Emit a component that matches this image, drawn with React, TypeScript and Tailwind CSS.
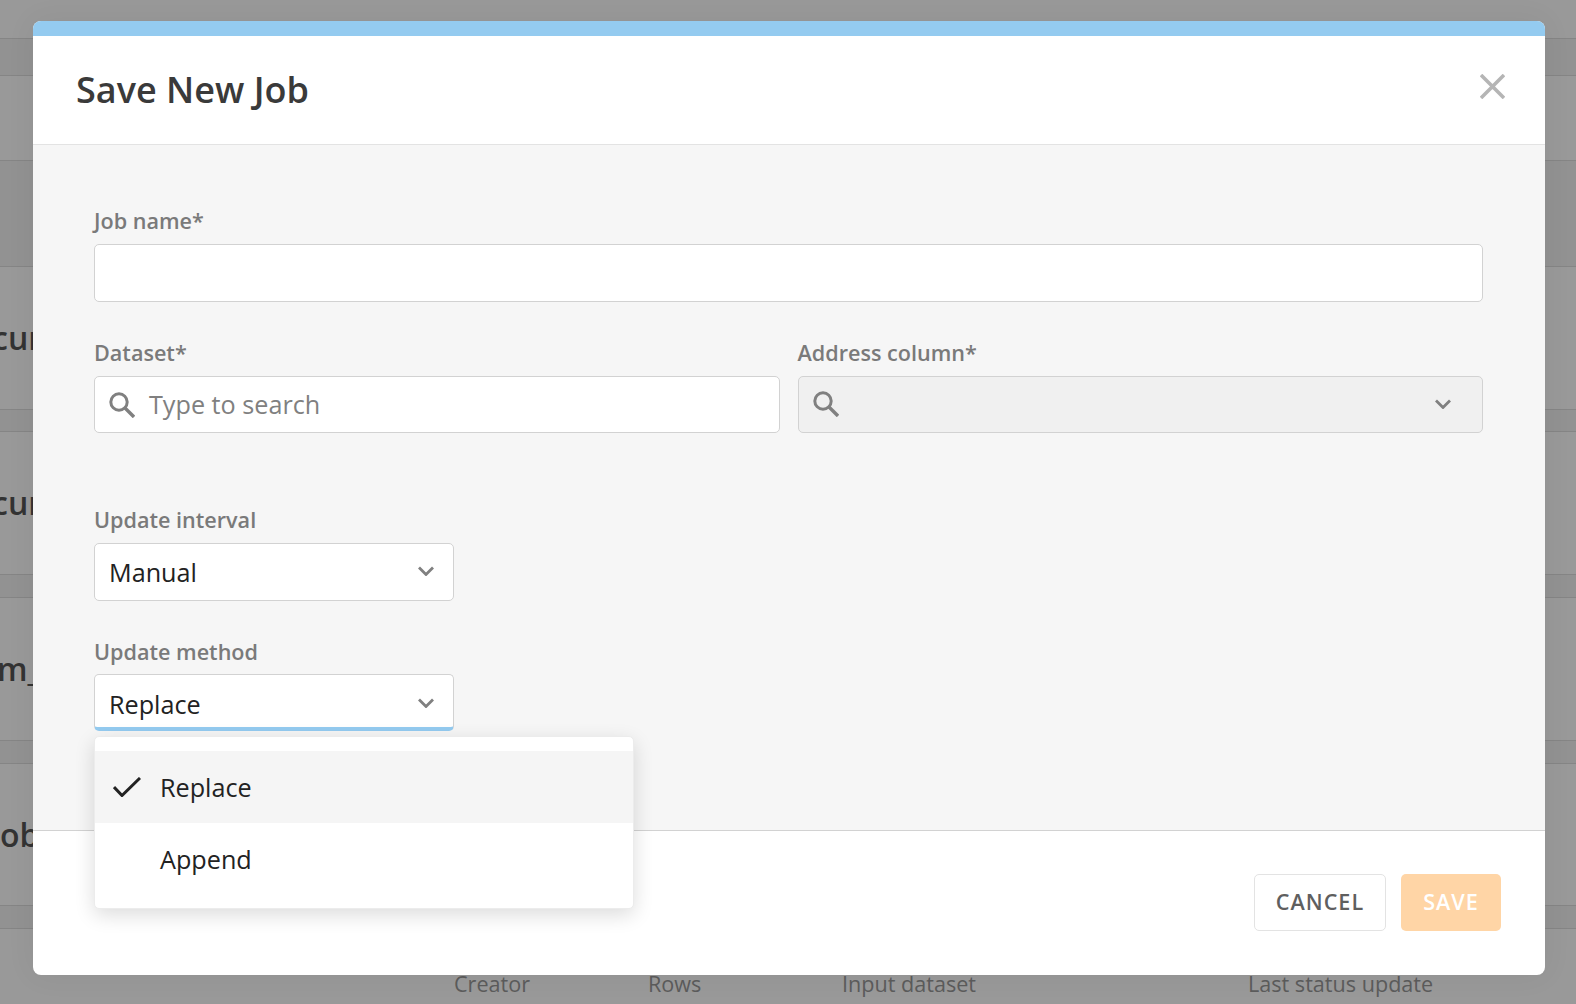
import React from "react";

const SearchIcon = ({ className = "" }: { className?: string }) => (
  <svg viewBox="0 0 26 26" className={`w-[26px] h-[26px] shrink-0 ${className}`} fill="none" stroke="#808080" strokeWidth="3">
    <circle cx="10" cy="10" r="8.2" />
    <path d="M16 16 L25 25" strokeWidth="3.4" />
  </svg>
);

const Chevron = ({ className = "" }: { className?: string }) => (
  <svg viewBox="0 0 16 10" className={`w-[16px] h-[10px] shrink-0 ${className}`} fill="none" stroke="#808080" strokeWidth="2.8">
    <path d="M1 1.5 L8 8.5 L15 1.5" />
  </svg>
);

const Label = ({ children }: { children: React.ReactNode }) => (
  <div className="h-[30px] leading-[32px] text-[21.6px] font-[550] text-[#7a7a7a]">{children}</div>
);

const Field = "rounded-[5px] border border-[#d2d2d2] bg-white";

// table that sits behind the dialog
const Row = ({ h, band, children }: { h: string; band?: boolean; children?: React.ReactNode }) => (
  <div className={`${h} ${band ? "bg-[#929292]" : "bg-[#999999]"} border-t border-[#858585] flex items-center overflow-hidden`}>
    {children}
  </div>
);

const Clipped = ({ children }: { children: React.ReactNode }) => (
  <span className="text-[32px] font-[550] text-[#333333] whitespace-nowrap">{children}</span>
);

export default function App() {
  return (
    <div className="relative h-screen w-full overflow-hidden bg-[#999999] font-['Open_Sans',sans-serif]">
      <div className="flex flex-col">
        <div className="h-[38px]" />
        <Row h="h-[37px]" band />
        <Row h="h-[85px]" />
        <Row h="h-[106px]" band />
        <Row h="h-[143px]">
          <span className="-ml-[8px]"><Clipped>cur</Clipped></span>
        </Row>
        <Row h="h-[22px]" band />
        <Row h="h-[143px]">
          <span className="-ml-[8px]"><Clipped>cur</Clipped></span>
        </Row>
        <Row h="h-[23px]" band />
        <Row h="h-[143px]">
          <span className="-ml-[3px]"><Clipped>m_</Clipped></span>
        </Row>
        <Row h="h-[23px]" band />
        <Row h="h-[142px]">
          <Clipped>ob</Clipped>
        </Row>
        <Row h="h-[23px]" band />
        <div className="h-[76px] border-t border-[#858585] bg-[#999999] pl-[454px] pt-[37px] flex text-[21.6px] leading-[36px] text-[#5c5c5c]">
          <span className="w-[194px]">Creator</span>
          <span className="w-[194px]">Rows</span>
          <span className="w-[406px]">Input dataset</span>
          <span>Last status update</span>
        </div>
      </div>

      <div className="absolute left-[33px] top-[21px] w-[1512px] h-[954px] flex flex-col rounded-[8px] bg-white shadow-[0_0_30px_rgba(0,0,0,0.06)]">
        <div className="h-[15px] rounded-t-[8px] bg-[#94cbf0]" />

        <div className="h-[109px] shrink-0 border-b border-[#e3e3e3] flex items-start justify-between pl-[43px] pr-[40px]">
          <h1 className="mt-[29px] text-[36px] leading-[50px] font-semibold text-[#3a3a3a]">Save New Job</h1>
          <svg viewBox="0 0 25 25" className="mt-[38px] w-[25px] h-[25px]" fill="none" stroke="#b5b5b5" strokeWidth="3.6">
            <path d="M1 1 L24 24 M24 1 L1 24" />
          </svg>
        </div>

        <div className="h-[685px] shrink-0 bg-[#f6f6f6] pl-[61px] pr-[62px] pt-[60px]">
          <Label>Job name*</Label>
          <div className={`${Field} mt-[9px] h-[58px]`} />

          <div className="mt-[35px] grid grid-cols-2 gap-[18px]">
            <div>
              <Label>Dataset*</Label>
              <div className={`${Field} mt-[9px] h-[57px] flex items-center pl-[14px] gap-[14px]`}>
                <SearchIcon />
                <span className="text-[25.2px] text-[#808080]">Type to search</span>
              </div>
            </div>
            <div>
              <Label>Address column*</Label>
              <div className="mt-[9px] h-[57px] rounded-[5px] border border-[#d2d2d2] bg-[#f0f0f0] flex items-center justify-between pl-[14px] pr-[31px]">
                <SearchIcon className="-mt-[2px]" />
                <Chevron className="-mt-[1px]" />
              </div>
            </div>
          </div>

          <div className="mt-[71px] w-[360px]">
            <Label>Update interval</Label>
            <div className={`${Field} mt-[9px] h-[58px] flex items-center justify-between pl-[14px] pr-[19px]`}>
              <span className="mt-[2px] text-[25.2px] text-[#222222]">Manual</span>
              <Chevron className="-mt-[3px]" />
            </div>
          </div>

          <div className="relative mt-[35px] w-[360px]">
            <Label>Update method</Label>
            <div className={`${Field} mt-[8px] h-[57px] border-b-[4px] border-b-[#94cbf0] flex items-center justify-between pl-[14px] pr-[19px]`}>
              <span className="mt-[8px] text-[25.2px] text-[#222222]">Replace</span>
              <Chevron className="mt-[3px]" />
            </div>

            <div className="absolute left-0 top-[100px] z-10 w-[540px] rounded-[5px] bg-white pt-[14px] pb-[13px] shadow-[0_6px_20px_rgba(0,0,0,0.14)] border border-[#ececec]">
              <div className="h-[72px] bg-[#f5f5f5] flex items-center pl-[18px] gap-[19px]">
                <svg viewBox="0 0 28 20" className="w-[28px] h-[20px] shrink-0" fill="none" stroke="#222222" strokeWidth="3">
                  <path d="M1 10 L9 18.5 L27 1" />
                </svg>
                <span className="mt-[2px] text-[25.2px] text-[#222222]">Replace</span>
              </div>
              <div className="h-[72px] flex items-center pl-[65px]">
                <span className="mt-[2px] text-[25.2px] text-[#222222]">Append</span>
              </div>
            </div>
          </div>
        </div>

        <div className="flex-1 border-t border-[#d2d2d2] flex items-start justify-end gap-[15px] pr-[44px] pt-[43px]">
          <button className="h-[57px] w-[132px] rounded-[5px] border border-[#e3e3e3] bg-white pb-[1px] text-[21.6px] font-[550] tracking-[1px] text-[#5f5f5f]">CANCEL</button>
          <button className="h-[57px] w-[100px] rounded-[5px] bg-[#ffd5a6] pb-[1px] text-[21.6px] font-[550] tracking-[1px] text-white">SAVE</button>
        </div>
      </div>
    </div>
  );
}
